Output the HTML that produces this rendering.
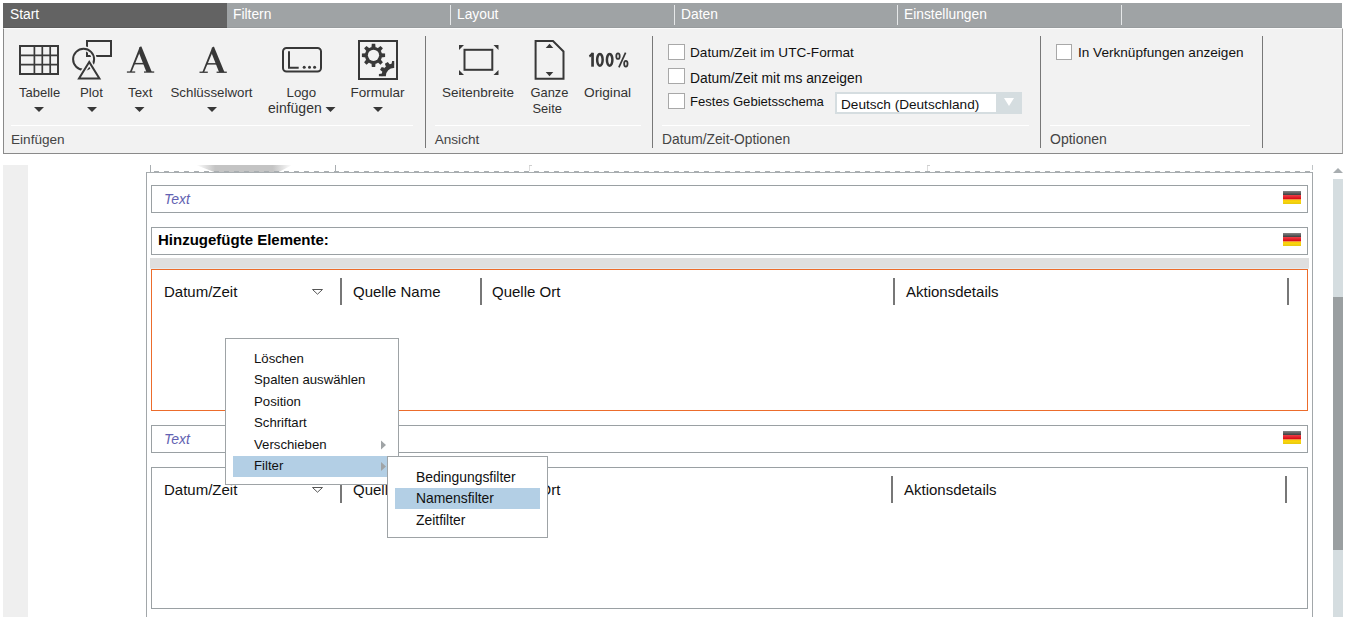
<!DOCTYPE html>
<html><head><meta charset="utf-8">
<style>
*{box-sizing:border-box;margin:0;padding:0}
html,body{width:1347px;height:617px;overflow:hidden;background:#fff;font-family:"Liberation Sans",sans-serif;position:relative}
.a{position:absolute}
.tabbar{left:3px;top:3px;width:1339px;height:25px;background:#9fa3a5}
.tab{position:absolute;top:0;height:25px;color:#fff;font-size:13.8px;line-height:23px}
.tsep{position:absolute;top:2px;width:1px;height:20px;background:#e6e8e9}
.ribbon{left:3px;top:28px;width:1340px;height:126px;background:#f2f2f2;border:1px solid #8a8a8a;border-top:1px solid #fbfbfb;border-right-color:#a4a4a4}
.lbl{position:absolute;font-size:13.3px;color:#333;white-space:nowrap;line-height:15px}
.grp{position:absolute;font-size:13.6px;color:#444;white-space:nowrap;line-height:15px}
.hsep{position:absolute;height:1px;background:#fff;top:125px}
.vsep{position:absolute;width:1px;background:#7a7a7a;top:36px;height:111px}
.arr{position:absolute;width:0;height:0;border-left:5px solid transparent;border-right:5px solid transparent;border-top:5px solid #333}
.cb{position:absolute;width:17px;height:16px;background:#fff;border:1px solid #a8a8a8}
.ct{position:absolute;font-size:13.6px;color:#111;white-space:nowrap;line-height:16px}
.th{position:absolute;font-size:15px;line-height:18px;color:#111;white-space:nowrap}
.menu{background:#fff;border:1px solid #9ea3a6}
.mi{position:absolute;font-size:13.2px;line-height:16px;color:#111;white-space:nowrap}
</style></head><body>
<!-- tab bar -->
<div class="a tabbar">
  <div class="tab" style="left:0;width:224px;background:#636363"><span style="padding-left:7px">Start</span></div>
  <div class="tab" style="left:230px">Filtern</div>
  <div class="tsep" style="left:447px"></div>
  <div class="tab" style="left:454px">Layout</div>
  <div class="tsep" style="left:671px"></div>
  <div class="tab" style="left:678px">Daten</div>
  <div class="tsep" style="left:894px"></div>
  <div class="tab" style="left:901px">Einstellungen</div>
  <div class="tsep" style="left:1118px"></div>
</div>
<div class="a" style="left:3px;top:27px;width:224px;height:1px;background:#5b5b5b"></div><div class="a" style="left:227px;top:27px;width:1115px;height:1px;background:#989c9e"></div>
<!-- ribbon -->
<div class="a ribbon"></div>

<!-- ribbon content -->
<svg class="a" style="left:0;top:0" width="1347" height="160" viewBox="0 0 1347 160">
  <g fill="none" stroke="#3a3a3a" stroke-width="2">
    <!-- table -->
    <rect x="20" y="46" width="38" height="28"/>
    <path d="M20 55.3H58M20 64.6H58M34.4 46V74M42.3 46V74M50.2 46V74" stroke-width="1.7"/>
  </g>
  <!-- plot -->
  <g fill="none" stroke-width="2">
    <rect x="87" y="41" width="24" height="15" stroke="#383838"/>
    <circle cx="83.6" cy="59.3" r="10.5" stroke="#f2f2f2" stroke-width="5"/>
    <circle cx="83.6" cy="59.3" r="10.5" stroke="#383838"/>
    <path d="M89.2 62L79 78.4H99.4Z" stroke="#f2f2f2" stroke-width="5" stroke-linejoin="miter"/>
    <path d="M89.2 62L79 78.4H99.4Z" stroke="#383838" stroke-linejoin="miter"/>
  </g>
  <!-- logo -->
  <rect x="283" y="48" width="38" height="23.5" rx="3.5" fill="none" stroke="#383838" stroke-width="2"/>
  <path d="M289 51.2V67.8H298.7" fill="none" stroke="#383838" stroke-width="2"/>
  <circle cx="304.2" cy="67.3" r="1.5" fill="#383838"/><circle cx="309.5" cy="67.3" r="1.5" fill="#383838"/><circle cx="314.6" cy="67.3" r="1.5" fill="#383838"/>
  <!-- formular -->
  <rect x="359" y="41" width="38" height="38" fill="none" stroke="#383838" stroke-width="2"/>
  <g fill="#383838">
    <g transform="translate(373.5 55.3)">
      <circle r="8.6"/>
      <g id="tooth"><path d="M-2.1 -7.5H2.1L1.7 -11.6H-1.7Z"/></g>
      <use href="#tooth" transform="rotate(45)"/><use href="#tooth" transform="rotate(90)"/><use href="#tooth" transform="rotate(135)"/>
      <use href="#tooth" transform="rotate(180)"/><use href="#tooth" transform="rotate(225)"/><use href="#tooth" transform="rotate(270)"/><use href="#tooth" transform="rotate(315)"/>
    </g>
    <circle cx="373.5" cy="55.3" r="5.6" fill="#f2f2f2"/>
    <clipPath id="boxclip"><rect x="370" y="55" width="24.2" height="21.2"/></clipPath>
    <g clip-path="url(#boxclip)">
    <g transform="translate(393.8 75.8)">
      <path fill-rule="evenodd" d="M-12.2 0A12.2 12.2 0 1 0 12.2 0A12.2 12.2 0 1 0 -12.2 0ZM-7.9 0A7.9 7.9 0 1 0 7.9 0A7.9 7.9 0 1 0 -7.9 0Z"/>
      <g id="t3"><path d="M-2.3 -11.5H2.3L1.7 -14.9H-1.7Z"/></g>
      <use href="#t3" transform="rotate(-30)"/><use href="#t3" transform="rotate(-60)"/><use href="#t3" transform="rotate(-90)"/>
    </g>
    </g>
  </g>
  <!-- seitenbreite -->
  <rect x="464.5" y="49.8" width="27.8" height="20" fill="none" stroke="#383838" stroke-width="2"/>
  <g fill="#383838">
    <path d="M459 45H464L459 50Z"/><path d="M498.5 45H493.5L498.5 50Z"/>
    <path d="M459 75H464L459 70Z"/><path d="M498.5 75H493.5L498.5 70Z"/>
  </g>
  <!-- ganze seite -->
  <path d="M535.6 41H553L563.5 51.5V78.7H535.6Z" fill="none" stroke="#383838" stroke-width="2"/>
  <g fill="#383838"><path d="M549.5 43.8L553.3 48H545.7Z"/><path d="M549.5 76.2L553.3 72H545.7Z"/></g>
  <!-- dropdown arrows -->
  <g fill="#383838">
    <path d="M34 107H44L39 112Z"/>
    <path d="M87 107H97L92 112Z"/>
    <path d="M134.5 107H144.5L139.5 112Z"/>
    <path d="M207 107H217L212 112Z"/>
    <path d="M325.5 107H335.5L330.5 112Z"/>
    <path d="M373 107H383L378 112Z"/>
  </g>
  <!-- separators -->
  <g fill="#787878">
    <rect x="425" y="36" width="1" height="112"/>
    <rect x="652" y="36" width="1" height="112"/>
    <rect x="1040" y="36" width="1" height="112"/>
    <rect x="1262" y="36" width="1" height="112"/>
  </g>
  <g fill="#fff">
    <rect x="11" y="125" width="402" height="1"/>
    <rect x="435" y="125" width="206" height="1"/>
    <rect x="662" y="125" width="367" height="1"/>
    <rect x="1050" y="125" width="200" height="1"/>
  </g>
</svg>
<svg class="a" style="left:0;top:0" width="240" height="80" viewBox="0 0 240 80">
  <g id="glyphA" fill="#383838">
    <path d="M139.2 47.6L140.6 46.6H141.4L151.8 71.9H146.4L139.2 53.6Z"/>
    <path d="M139.6 47.2L140.9 49.6L131.6 71.9H129.8Z"/>
    <path d="M133.6 62.9H145.1V64.4H133.6Z"/>
    <path d="M126.9 71.4H135.2V72.7H126.9Z"/>
    <path d="M144 71.4H154.2V72.7H144Z"/>
  </g>
  <use href="#glyphA" transform="translate(72.6 0.2)"/>
</svg>

<svg class="a" style="left:580px;top:45px" width="60" height="30" viewBox="580 45 60 30">
  <g fill="#383838"><path d="M591.2 52.8H593.9V66.7H591.2Z"/><path d="M588.9 55.6L591.6 52.8H592.6L592.6 55.2L589.9 57.6Z"/></g>
  <g fill="none" stroke="#383838">
    <ellipse cx="599.9" cy="59.85" rx="2.75" ry="5.95" stroke-width="2.5"/>
    <ellipse cx="609.65" cy="59.85" rx="2.75" ry="5.95" stroke-width="2.5"/>
    <ellipse cx="618" cy="56.2" rx="1.7" ry="2.75" stroke-width="1.8"/>
    <ellipse cx="625.85" cy="63.75" rx="1.7" ry="2.8" stroke-width="1.8"/>
    <path d="M625.6 52.6L618.9 67.4" stroke-width="1.7"/>
  </g>
</svg>
<div class="lbl" style="left:19px;top:85px;font-size:13px">Tabelle</div>
<div class="lbl" style="left:80px;top:85px">Plot</div>
<div class="lbl" style="left:128px;top:85px">Text</div>
<div class="lbl" style="left:170.5px;top:85px">Schlüsselwort</div>
<div class="lbl" style="left:286.5px;top:85px">Logo</div>
<div class="lbl" style="left:268px;top:101px;font-size:14px">einfügen</div>
<div class="lbl" style="left:350.6px;top:85px;font-size:13.5px">Formular</div>
<div class="lbl" style="left:442px;top:85px;font-size:13.5px">Seitenbreite</div>
<div class="lbl" style="left:530.5px;top:85px;font-size:12.9px">Ganze</div>
<div class="lbl" style="left:532.5px;top:101px;font-size:12.9px">Seite</div>
<div class="lbl" style="left:584px;top:85px;font-size:13.7px">Original</div>
<div class="grp" style="left:11px;top:132px">Einfügen</div>
<div class="grp" style="left:434.7px;top:132px">Ansicht</div>
<div class="grp" style="left:662px;top:132px;font-size:13.8px">Datum/Zeit-Optionen</div>
<div class="grp" style="left:1050px;top:132px;font-size:14px">Optionen</div>
<div class="cb" style="left:668px;top:44px"></div>
<div class="cb" style="left:668px;top:68px"></div>
<div class="cb" style="left:668px;top:93px"></div>
<div class="cb" style="left:1056px;top:44px;width:16px"></div>
<div class="ct" style="left:690px;top:45px">Datum/Zeit im UTC-Format</div>
<div class="ct" style="left:690px;top:70px;font-size:13.85px">Datum/Zeit mit ms anzeigen</div>
<div class="ct" style="left:690px;top:94px;font-size:13.1px">Festes Gebietsschema</div>
<div class="ct" style="left:1078px;top:45px">In Verknüpfungen anzeigen</div>
<div class="a" style="left:835px;top:92px;width:187px;height:22px;background:#d5dde0"></div>
<div class="a" style="left:837px;top:94px;width:159px;height:18px;background:#fff"></div>
<div class="ct" style="left:841px;top:97px">Deutsch (Deutschland)</div>
<svg class="a" style="left:996px;top:92px" width="26" height="22"><path d="M8 6H18L13 14Z" fill="#fff"/></svg>

<!-- document area -->
<div class="a" style="left:3px;top:165px;width:25px;height:452px;background:#efefef"></div>
<svg class="a" style="left:0;top:155px" width="1347" height="462" viewBox="0 155 1347 462">
  <defs>
    <linearGradient id="fb" x1="0" y1="0" x2="0" y2="1"><stop offset="0" stop-color="#858585"/><stop offset="1" stop-color="#3e3e3e"/></linearGradient>
    <linearGradient id="fr" x1="0" y1="0" x2="0" y2="1"><stop offset="0" stop-color="#ee4048"/><stop offset="1" stop-color="#d8000c"/></linearGradient>
    <linearGradient id="fg" x1="0" y1="0" x2="0" y2="1"><stop offset="0" stop-color="#f6a800"/><stop offset="0.3" stop-color="#fcd90c"/><stop offset="1" stop-color="#e8c810"/></linearGradient>
    <g id="flag">
      <rect x="0" y="0" width="18" height="4" fill="url(#fb)"/>
      <rect x="0" y="4" width="18" height="4.5" fill="url(#fr)"/>
      <rect x="0" y="8.5" width="18" height="4.5" fill="url(#fg)"/>
    </g>
  </defs>
  <!-- blurry image bottom -->
  <linearGradient id="sh" x1="0" y1="0" x2="1" y2="0"><stop offset="0" stop-color="#c4c4c4" stop-opacity="0"/><stop offset="0.2" stop-color="#c4c4c4" stop-opacity="1"/><stop offset="0.8" stop-color="#c4c4c4" stop-opacity="1"/><stop offset="1" stop-color="#c4c4c4" stop-opacity="0"/></linearGradient><path d="M196 165H292L279 172H214Z" fill="url(#sh)"/>
  <!-- page top line -->
  <rect x="146" y="172" width="1167" height="1" fill="#a9aeb1"/>
  <path d="M154 171.5H709M715 171.5H1310" stroke="#a9aeb1" stroke-width="1" stroke-dasharray="5 5"/>
  <rect x="150" y="165" width="1" height="7" fill="#a9aeb1"/>
  <rect x="335" y="165" width="1" height="7" fill="#a9aeb1"/>
  <rect x="1312" y="165" width="1" height="5" fill="#c0c4c6"/>
  <rect x="529" y="165" width="1" height="6" fill="#dcdcdc"/><rect x="529" y="165" width="3" height="1" fill="#cfcfcf"/>
  <rect x="927" y="165" width="1" height="6" fill="#dcdcdc"/><rect x="927" y="165" width="3" height="1" fill="#cfcfcf"/>
  <!-- page borders -->
  <rect x="146" y="172" width="1" height="445" fill="#a2a7aa"/>
  <rect x="1312" y="172" width="1" height="445" fill="#a2a7aa"/>
  <!-- boxes -->
  <rect x="151.5" y="185.5" width="1156" height="27" fill="#fff" stroke="#9aa0a3"/>
  <rect x="151.5" y="227.5" width="1156" height="27" fill="#fff" stroke="#9aa0a3"/>
  <rect x="150" y="258" width="1159" height="10" fill="#dfdfdf"/><rect x="150" y="268" width="1159" height="1" fill="#e4ebee"/>
  <rect x="151.5" y="269.5" width="1156" height="141" fill="#fff" stroke="#ec6c2c"/>
  <rect x="151.5" y="425.5" width="1156" height="27" fill="#fff" stroke="#9aa0a3"/>
  <rect x="151.5" y="467.5" width="1156" height="141" fill="#fff" stroke="#9aa0a3"/>
  <use href="#flag" x="1283" y="191"/>
  <use href="#flag" x="1283" y="233"/>
  <use href="#flag" x="1283" y="431"/>
  <!-- table separators -->
  <g fill="#777">
    <rect x="340" y="278" width="2" height="27"/>
    <rect x="480" y="278" width="2" height="27"/>
    <rect x="893" y="278" width="2" height="27"/>
    <rect x="1287" y="278" width="2" height="27"/>
    <rect x="340" y="476" width="2" height="27"/>
    <rect x="480" y="476" width="2" height="27"/>
    <rect x="891" y="476" width="2" height="27"/>
    <rect x="1285" y="476" width="2" height="27"/>
  </g>
  <g fill="none" stroke="#555" stroke-width="1">
    <path d="M312.5 289.5H322.5L317.5 294.2Z"/>
    <path d="M312.5 487.5H322.5L317.5 492.2Z"/>
  </g>
  <!-- scrollbar -->
  <path d="M1333 173H1343L1338 168Z" fill="#a8adb0"/>
  <rect x="1333" y="179" width="10" height="438" fill="#d5dde0"/>
  <rect x="1333" y="297" width="10" height="253" fill="#9a9fa1"/>
</svg>
<div class="a" style="left:164px;top:191px;font-style:italic;font-size:14px;line-height:16px;color:#6262b2">Text</div>
<div class="a" style="left:164px;top:431px;font-style:italic;font-size:14px;line-height:16px;color:#6262b2">Text</div>
<div class="a" style="left:158px;top:231px;font-weight:bold;font-size:15px;line-height:18px;color:#000">Hinzugefügte Elemente:</div>
<div class="th" style="left:164px;top:283px">Datum/Zeit</div>
<div class="th" style="left:353px;top:283px">Quelle Name</div>
<div class="th" style="left:492px;top:283px">Quelle Ort</div>
<div class="th" style="left:906px;top:283px">Aktionsdetails</div>
<div class="th" style="left:164px;top:481px">Datum/Zeit</div>
<div class="th" style="left:353px;top:481px">Quelle Name</div>
<div class="th" style="left:492px;top:481px">Quelle Ort</div>
<div class="th" style="left:904px;top:481px">Aktionsdetails</div>
<!-- context menu -->
<div class="a menu" style="left:225px;top:338px;width:174px;height:147px"></div>
<div class="a" style="left:233px;top:456px;width:166px;height:21px;background:#b3cfe5"></div>
<div class="mi" style="left:254px;top:351px">Löschen</div>
<div class="mi" style="left:254px;top:372px">Spalten auswählen</div>
<div class="mi" style="left:254px;top:394px">Position</div>
<div class="mi" style="left:254px;top:415px">Schriftart</div>
<div class="mi" style="left:254px;top:437px">Verschieben</div>
<div class="mi" style="left:254px;top:458px">Filter</div>
<svg class="a" style="left:380px;top:438px" width="8" height="40"><path d="M1 2.5L6 7L1 11.5Z" fill="#a0a4a6"/><path d="M1 24L6 28.5L1 33Z" fill="#a0a4a6"/></svg>
<div class="a menu" style="left:387px;top:456px;width:161px;height:82px"></div>
<div class="a" style="left:395px;top:488px;width:145px;height:21px;background:#b3cfe5"></div>
<div class="mi" style="left:416px;top:469px;font-size:13.9px">Bedingungsfilter</div>
<div class="mi" style="left:416px;top:490px;font-size:13.9px">Namensfilter</div>
<div class="mi" style="left:416px;top:512px;font-size:13.9px">Zeitfilter</div>
</body></html>
